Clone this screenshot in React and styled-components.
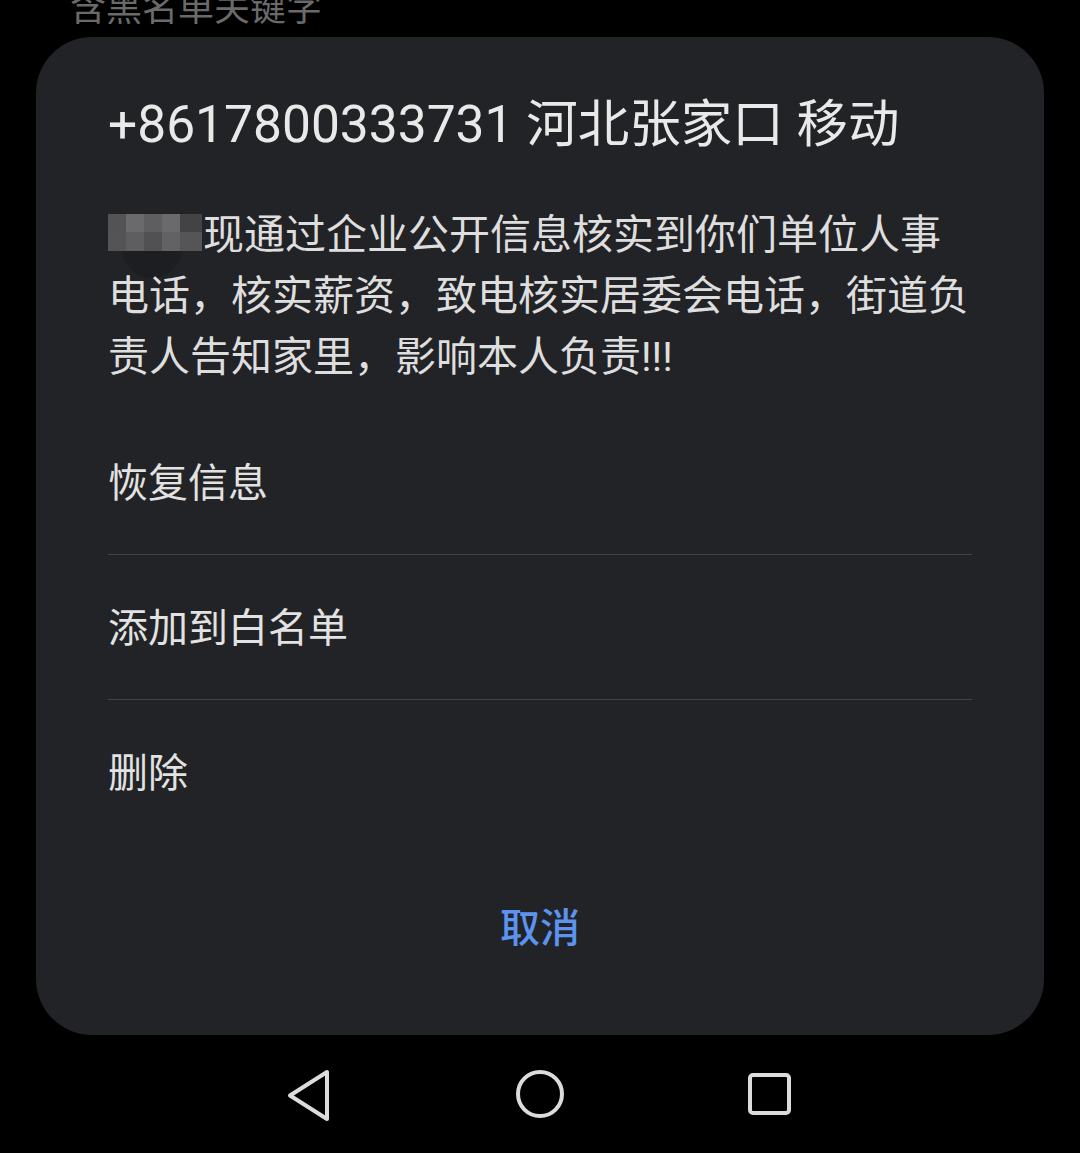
import React from 'react';
import styled, { createGlobalStyle } from 'styled-components';

const Global = createGlobalStyle`
  html, body { margin: 0; padding: 0; background: #000; }
  body { font-family: Roboto, "Noto Sans CJK SC", sans-serif; }
`;

const Screen = styled.div`
  width: 1080px;
  height: 1153px;
  background: #000;
  display: flex;
  flex-direction: column;
  overflow: hidden;
`;

const BehindStrip = styled.div`
  height: 37px;
  overflow: hidden;
  display: flex;
  align-items: flex-end;
  padding-left: 70px;
`;

const BehindText = styled.div`
  font-size: 36px;
  line-height: 36px;
  color: #6a6a6a;
  margin-bottom: 10px;
  white-space: nowrap;
`;

const Dialog = styled.div`
  margin-left: 36px;
  width: 1008px;
  box-sizing: border-box;
  background: #222326;
  border-radius: 56px;
  padding: 53px 72px 50px;
  display: flex;
  flex-direction: column;
`;

const Title = styled.div`
  font-size: 51.5px;
  line-height: 70px;
  font-weight: 400;
  color: #e9e9e9;
  white-space: nowrap;
`;

const Message = styled.div`
  margin-top: 45px;
  font-size: 41px;
  color: #dedede;
  white-space: nowrap;
`;

const MessageLine = styled.div`
  height: 61px;
  line-height: 61px;
`;

const Mosaic = styled.svg`
  display: inline-block;
  width: 94px;
  height: 37px;
  vertical-align: -2px;
  margin-right: 1px;
  overflow: visible;
`;

const OptionList = styled.div`
  margin-top: 22px;
  display: flex;
  flex-direction: column;
`;

const OptionRow = styled.div`
  height: 145px;
  box-sizing: border-box;
  padding-bottom: 5px;
  display: flex;
  align-items: center;
  font-size: 40px;
  color: #e2e2e2;
  border-bottom: ${p => (p.$last ? 'none' : '1px solid #434345')};
`;

const CancelButton = styled.div`
  margin-top: 20px;
  height: 120px;
  display: flex;
  align-items: center;
  justify-content: center;
  font-size: 40px;
  font-weight: 500;
  color: #5b93ee;
`;

const NavBar = styled.div`
  flex: 1;
  display: flex;
  align-items: center;
  justify-content: center;
  gap: 174px;
`;

const NavIcon = styled.svg`
  width: 56px;
  height: 56px;
  display: block;
`;

const tiles = [
  ['#535355', '#6a6a6c', '#5e5e60', '#6a6a6c', '#434345'],
  ['#545456', '#5e5e60', '#515153', '#626264', '#555557'],
];
const colX = [0, 18, 36, 54, 72];
const colW = [18, 18, 18, 18, 22];
const rowY = [0, 18];
const rowH = [18, 19];

const options = ['恢复信息', '添加到白名单', '删除'];

export default function App() {
  return (
    <>
      <Global />
      <Screen>
        <BehindStrip>
          <BehindText>含黑名单关键字</BehindText>
        </BehindStrip>
        <Dialog>
          <Title>+8617800333731 河北张家口 移动</Title>
          <Message>
            <MessageLine>
              <Mosaic viewBox="0 0 94 37">
                <ellipse cx="44" cy="34" rx="30" ry="30" fill="#1d1e21" />
                {tiles.map((row, r) =>
                  row.map((c, i) => (
                    <rect key={`${r}-${i}`} x={colX[i]} y={rowY[r]} width={colW[i]} height={rowH[r]} fill={c} />
                  ))
                )}
              </Mosaic>
              现通过企业公开信息核实到你们单位人事
            </MessageLine>
            <MessageLine>电话，核实薪资，致电核实居委会电话，街道负</MessageLine>
            <MessageLine>责人告知家里，影响本人负责!!!</MessageLine>
          </Message>
          <OptionList>
            {options.map((o, i) => (
              <OptionRow key={o} $last={i === options.length - 1}>
                {o}
              </OptionRow>
            ))}
          </OptionList>
          <CancelButton>取消</CancelButton>
        </Dialog>
        <NavBar>
          <NavIcon viewBox="0 0 56 56" fill="none" stroke="#dcdcdc" strokeWidth="4" strokeLinejoin="round">
            <path d="M8 29.5 L45 6 L45 53 Z" />
          </NavIcon>
          <NavIcon viewBox="0 0 56 56" fill="none" stroke="#dcdcdc" strokeWidth="4">
            <circle cx="28" cy="28" r="22" />
          </NavIcon>
          <NavIcon viewBox="0 0 56 56" fill="none" stroke="#dcdcdc" strokeWidth="4">
            <rect x="8" y="9" width="39" height="38" rx="3" />
          </NavIcon>
        </NavBar>
      </Screen>
    </>
  );
}
